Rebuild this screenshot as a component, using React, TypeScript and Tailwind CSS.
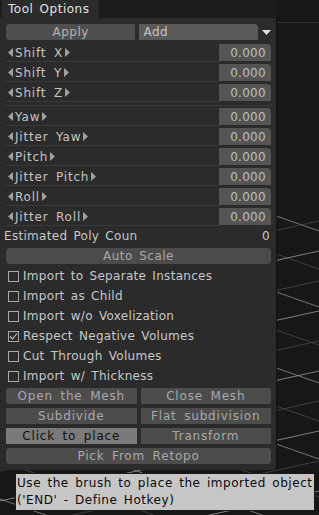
import React from 'react';

const FONT = { fontFamily: '"DejaVu Sans", "Liberation Sans", sans-serif' };

const Tri = ({ dir }: { dir: 'l' | 'r' }) => (
    <svg width="5" height="9" viewBox="0 0 5 9" className="shrink-0">
        {dir === 'l' ? <polygon points="5,0 5,9 0,4.5" fill="#a0a0a0" /> : <polygon points="0,0 0,9 5,4.5" fill="#a0a0a0" />}
    </svg>
);

const NumRow = ({ label }: { label: string }) => (
    <div className="flex h-[20px] items-start">
        <div className="flex h-[18px] flex-1 items-center gap-[2px] border-b border-[#393939] pl-[3px]">
            <Tri dir="l" />
            <span className="text-[12px] tracking-[0.8px] text-[#c4c4c4] [word-spacing:3px]">{label}</span>
            <Tri dir="r" />
        </div>
        <div className="flex h-[17px] w-[52px] items-center justify-end rounded-tr-[4px] bg-[#555555] pr-[5px] text-[12px] tracking-[0.3px] text-[#bdbdbd]">
            0.000
        </div>
    </div>
);

const Check = ({ label, checked }: { label: string; checked?: boolean }) => (
    <div className="flex h-[20px] items-center gap-[4px] pl-[3px]">
        <div className="flex h-[11px] w-[11px] items-center justify-center border border-[#a8a8a8]">
            {checked && (
                <svg width="9" height="9" viewBox="0 0 9 9">
                    <polyline points="1,4.5 3.5,7 8,1.5" fill="none" stroke="#c8c8c8" strokeWidth="1.1" />
                </svg>
            )}
        </div>
        <span className="text-[12px] tracking-[0.3px] text-[#c8c8c8] [word-spacing:2px]">{label}</span>
    </div>
);

const Btn = ({ label, active, className = '' }: { label: string; active?: boolean; className?: string }) => (
    <div
        className={`flex h-[16px] items-center justify-center text-[12px] tracking-[0.8px] [word-spacing:3px] ${active ? 'bg-[#7a7a7a] text-[#111111]' : 'bg-[#4c4c4c] text-[#a9a9a9]'} ${className}`}
    >
        {label}
    </div>
);

// perspective grid in the viewport
const gridA = Array.from({ length: 14 }, (_, i) => 140 + i * 38);
const gridB = Array.from({ length: 14 }, (_, i) => 200 + i * 30);

const App: React.FC = () => {
    return (
        <div className="relative h-[515px] w-[319px] overflow-hidden bg-[#171717]" style={FONT}>
            {/* viewport */}
            <svg className="absolute inset-0" width="319" height="515">
                <defs>
                    <clipPath id="vp">
                        <rect x="0" y="212" width="319" height="303" />
                    </clipPath>
                </defs>
                <line x1="277" y1="22.5" x2="319" y2="22.5" stroke="#333333" />
                <g clipPath="url(#vp)">
                    {gridA.map((c, i) => (
                        <line key={'a' + i} x1="0" y1={c - 97} x2="319" y2={c + 15} stroke={i % 2 ? '#4a4a4a' : '#8e8e8e'} strokeWidth="0.8" />
                    ))}
                    {gridB.map((c, i) => (
                        <line key={'b' + i} x1="0" y1={c + 61} x2="319" y2={c - 9} stroke={i % 2 ? '#4a4a4a' : '#9a9a9a'} strokeWidth="0.8" />
                    ))}
                </g>
            </svg>

            <div className="relative w-[277px]">
                {/* tab bar */}
                <div className="flex h-[18px] bg-[#1c1c1c]">
                    <div className="ml-[2px] flex w-[97px] items-center rounded-tr-[3px] bg-[#2b2b2b] pl-[6px] text-[12px] tracking-[0.5px] text-[#e2e2e2] [word-spacing:2px]">
                        Tool Options
                    </div>
                </div>

                {/* panel */}
                <div className="h-[452px] rounded-br-[4px] border-r border-[#111111] bg-[#2b2b2b] pl-[5px] pr-[5px] pt-[6px]">
                    <div className="flex h-[16px] gap-[4px] pl-[1px]">
                        <div className="flex w-[130px] items-center justify-center rounded-l-[4px] bg-[#4f4f4f] text-[12px] tracking-[0.5px] text-[#b4b4b4]">
                            Apply
                        </div>
                        <div className="flex w-[119px] items-center rounded-tr-[4px] bg-[#5a5a5a] pl-[4px] text-[12px] tracking-[0.5px] text-[#c8c8c8]">
                            Add
                        </div>
                        <div className="flex flex-1 items-center justify-center">
                            <svg width="9" height="5" viewBox="0 0 9 5">
                                <polygon points="0,0 9,0 4.5,5" fill="#e0e0e0" />
                            </svg>
                        </div>
                    </div>

                    <div className="mt-[4px]">
                        <NumRow label="Shift X" />
                        <NumRow label="Shift Y" />
                        <NumRow label="Shift Z" />
                    </div>
                    <div className="mb-[2px] mt-[1px] mr-[-2px] h-px bg-[#3c3c3c]" />
                    <div>
                        <NumRow label="Yaw" />
                        <NumRow label="Jitter Yaw" />
                        <NumRow label="Pitch" />
                        <NumRow label="Jitter Pitch" />
                        <NumRow label="Roll" />
                        <NumRow label="Jitter Roll" />
                    </div>

                    <div className="ml-[-1px] flex h-[16px] items-center justify-between pr-[1px] text-[12px] tracking-[0.3px] text-[#c8c8c8] [word-spacing:2px]">
                        <span>Estimated Poly Coun</span>
                        <span>0</span>
                    </div>
                    <div className="ml-[1px] mt-[4px] flex h-[16px] items-center justify-center rounded-[4px] bg-[#4b4b4b] text-[12px] tracking-[0.5px] text-[#a9a9a9] [word-spacing:2px]">
                        Auto Scale
                    </div>

                    <div className="mt-[2px]">
                        <Check label="Import to Separate Instances" />
                        <Check label="Import as Child" />
                        <Check label="Import w/o Voxelization" />
                        <Check label="Respect Negative Volumes" checked />
                        <Check label="Cut Through Volumes" />
                        <Check label="Import w/ Thickness" />
                    </div>

                    <div className="mt-[2px] grid grid-cols-2 gap-x-[4px] gap-y-[4px] pl-[1px]">
                        <Btn label="Open the Mesh" className="rounded-l-[3px]" />
                        <Btn label="Close Mesh" className="rounded-r-[3px]" />
                        <Btn label="Subdivide" />
                        <Btn label="Flat subdivision" />
                        <Btn label="Click to place" active />
                        <Btn label="Transform" />
                        <Btn label="Pick From Retopo" className="col-span-2 rounded-[4px]" />
                    </div>
                </div>
            </div>

            {/* tooltip */}
            <div className="absolute left-[15px] top-[473px] w-[300px] whitespace-nowrap border border-[#1a1a1a] bg-[#c6c6c6] px-[1px] py-[1px] text-[12px] leading-[17px] tracking-[0.55px] text-[#0a0a0a] [word-spacing:2px]">
                <div>Use the brush to place the imported object</div>
                <div>('END' - Define Hotkey)</div>
            </div>
        </div>
    );
};

export default App;
